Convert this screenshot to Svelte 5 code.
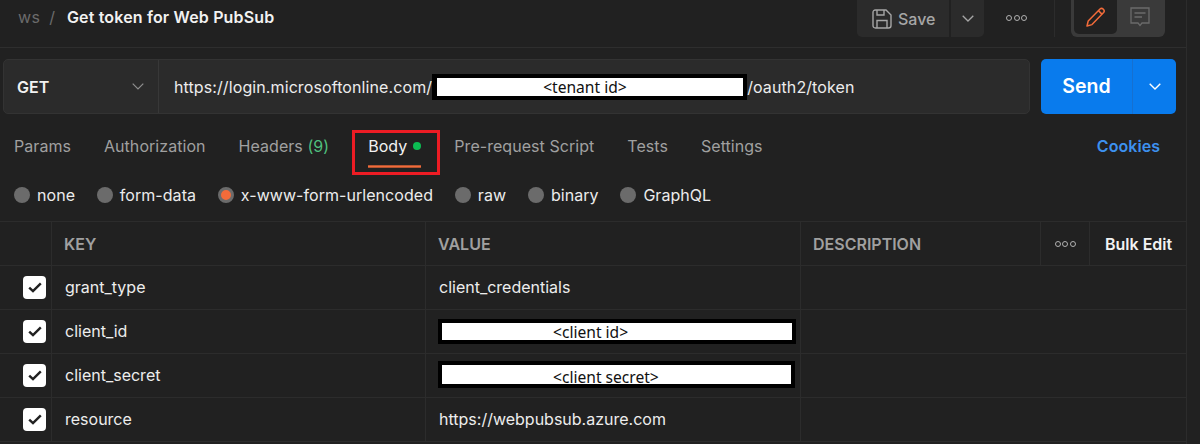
<script lang="ts">
	const tabs = [
		{ label: 'Params' },
		{ label: 'Authorization' },
		{ label: 'Headers', count: '(9)' },
		{ label: 'Body', active: true },
		{ label: 'Pre-request Script' },
		{ label: 'Tests' },
		{ label: 'Settings' }
	];
	const bodyTypes = ['none', 'form-data', 'x-www-form-urlencoded', 'raw', 'binary', 'GraphQL'];
	const rows = [
		{ key: 'grant_type', value: 'client_credentials' },
		{ key: 'client_id', mask: '<client id>' },
		{ key: 'client_secret', mask: '<client secret>' },
		{ key: 'resource', value: 'https://webpubsub.azure.com' }
	];
</script>

<div class="page">
	<!-- Title bar -->
	<header class="topbar">
		<span class="crumb">ws</span>
		<span class="slash">/</span>
		<span class="title">Get token for Web PubSub</span>
		<div class="actions">
			<div class="save">
				<svg width="20" height="20" viewBox="0 0 20 20" fill="none" stroke="#a6a6a6" stroke-width="1.4">
					<path d="M1 3.5 Q1 1 3.5 1 H14 L19 6 V16.5 Q19 19 16.5 19 H3.5 Q1 19 1 16.5 Z" />
					<path d="M5 1 V6 H12 V1" />
					<path d="M5 19 V11.5 H15 V19" />
				</svg>
				<span>Save</span>
			</div>
			<div class="save-more">
				<svg width="12" height="7" viewBox="0 0 12 7" fill="none" stroke="#a6a6a6" stroke-width="1.3"><path d="M.7.7 6 6 11.3.7" /></svg>
			</div>
			<div class="dots"><i></i><i></i><i></i></div>
			<div class="divider"></div>
			<div class="toggle">
				<div class="toggle-on">
					<svg width="20" height="20" viewBox="0 0 20 20" fill="none" stroke="#f26b3a" stroke-width="1.5" stroke-linejoin="round">
						<path d="M1 19 L2.2 14 L14 2 Q15.6 .6 17.4 2.2 Q19 4 17.6 5.6 L6 17.6 Z" />
						<path d="M12.4 3.6 L16.2 7.4" />
					</svg>
				</div>
				<div class="toggle-off">
					<svg width="20" height="20" viewBox="0 0 20 20" fill="none" stroke="#6b6b6b" stroke-width="1.3">
						<path d="M1 1 H19 V16 H12 L10 18.5 L8 16 H1 Z" />
						<path d="M4.5 6 H15.5 M4.5 10 H12" />
					</svg>
				</div>
			</div>
		</div>
	</header>

	<!-- URL row -->
	<div class="request">
		<div class="urlbox">
			<div class="method">
				<span>GET</span>
				<svg width="12" height="7" viewBox="0 0 12 7" fill="none" stroke="#8f8f8f" stroke-width="1.2"><path d="M.7.7 6 6 11.3.7" /></svg>
			</div>
			<div class="url">
				<span>https://login.microsoftonline.com/</span><span class="mask tenant">&lt;tenant id&gt;</span><span>/oauth2/token</span>
			</div>
		</div>
		<div class="send">
			<span class="send-label">Send</span>
			<span class="send-more">
				<svg width="12" height="7" viewBox="0 0 12 7" fill="none" stroke="#fff" stroke-width="1.4"><path d="M.7.7 6 6 11.3.7" /></svg>
			</span>
		</div>
	</div>

	<!-- Tabs -->
	<nav class="tabs">
		{#each tabs as tab}
			<div class="tab" class:active={tab.active}>
				{tab.label}
				{#if tab.count}<span class="count">{tab.count}</span>{/if}
				{#if tab.active}
					<span class="dot"></span>
					<span class="underline"></span>
					<span class="callout"></span>
				{/if}
			</div>
		{/each}
		<div class="cookies">Cookies</div>
	</nav>

	<!-- Body type -->
	<div class="types">
		{#each bodyTypes as type}
			<div class="type">
				<span class="radio" class:checked={type === 'x-www-form-urlencoded'}></span>
				<span>{type}</span>
			</div>
		{/each}
	</div>

	<!-- Params table -->
	<div class="table">
		<div class="cell head"></div>
		<div class="cell head label">KEY</div>
		<div class="cell head label">VALUE</div>
		<div class="cell head label">DESCRIPTION</div>
		<div class="cell head more"><div class="dots small"><i></i><i></i><i></i></div></div>
		<div class="cell head bulk">Bulk Edit</div>

		{#each rows as row}
			<div class="cell check">
				<span class="box">
					<svg width="14" height="11" viewBox="0 0 14 11" fill="none" stroke="#212121" stroke-width="2.4"><path d="M1.2 5.6 5 9.2 12.8 1.4" /></svg>
				</span>
			</div>
			<div class="cell text">{row.key}</div>
			<div class="cell text">
				{#if row.mask}
					<span class="mask wide" class:secret={row.mask.includes('secret')}>{row.mask}</span>
				{:else}
					{row.value}
				{/if}
			</div>
			<div class="cell desc"></div>
		{/each}
	</div>
</div>

<style>
	:global(body) {
		background: #212121;
	}

	.page {
		position: relative;
		width: 1187px;
		height: 444px;
		box-sizing: border-box;
		border-right: 1px solid #2c2c2c;
		overflow: hidden;
		background: #212121;
		color: #f0f0f0;
		font-family: Inter, 'Liberation Sans', sans-serif;
	}

	/* Title bar */
	.topbar {
		display: flex;
		align-items: flex-start;
		height: 48px;
		box-sizing: border-box;
		padding-left: 18px;
		border-bottom: 1px solid #2e2e2e;
	}

	.crumb {
		margin-top: 7px;
		font-size: 16px;
		line-height: 20px;
		color: #6b6b6b;
		letter-spacing: 0.3px;
	}

	.slash {
		margin: 7px 0 0 9px;
		font-size: 16px;
		line-height: 20px;
		color: #6b6b6b;
	}

	.title {
		margin: 7px 0 0 12px;
		font-size: 16px;
		line-height: 20px;
		font-weight: 600;
		letter-spacing: 0.16px;
		color: #f2f2f2;
	}

	.actions {
		display: flex;
		align-items: flex-start;
		margin-left: auto;
		margin-top: -10px;
		margin-right: 21px;
	}

	.save,
	.save-more {
		display: flex;
		align-items: center;
		height: 47px;
		box-sizing: border-box;
		padding-top: 10px;
		background: #2b2b2b;
	}

	.save {
		width: 92px;
		padding-left: 15px;
		gap: 6px;
		border-radius: 0 0 0 5px;
		font-size: 16px;
		font-weight: 500;
		color: #a6a6a6;
	}

	.save-more {
		width: 33px;
		margin-left: 2px;
		justify-content: center;
		border-radius: 0 0 5px 0;
	}

	.dots {
		display: flex;
		gap: 1.5px;
		margin: 25px 0 0 22px;
	}

	.dots i {
		display: block;
		width: 4px;
		height: 4px;
		border: 1.2px solid #b0b0b0;
		border-radius: 50%;
	}

	.divider {
		width: 1px;
		height: 47px;
		margin-left: 27px;
		background: #2c2c2c;
	}

	.toggle {
		display: flex;
		width: 94px;
		height: 47px;
		margin-left: 16px;
		box-sizing: border-box;
		padding: 0 3px 3px;
		border-radius: 0 0 6px 6px;
		background: #3a3a3a;
	}

	.toggle-on,
	.toggle-off {
		display: flex;
		align-items: center;
		justify-content: center;
		padding-top: 10px;
		height: 34px;
		width: 43px;
	}

	.toggle-on {
		background: #212121;
		border-radius: 0 0 5px 5px;
	}

	.toggle-off {
		flex: 1;
	}

	/* URL row */
	.request {
		display: flex;
		gap: 11px;
		margin: 11px 10px 0 3px;
		height: 55px;
	}

	.urlbox {
		display: flex;
		flex: 1;
		box-sizing: border-box;
		border: 1px solid #333;
		border-radius: 5px;
		background: #2b2b2b;
	}

	.method {
		display: flex;
		align-items: center;
		justify-content: space-between;
		width: 155px;
		box-sizing: border-box;
		padding: 0 14px 0 13px;
		border-right: 1px solid #383838;
		font-size: 16px;
		font-weight: 600;
		color: #f2f2f2;
	}

	.url {
		display: flex;
		align-items: center;
		padding-left: 15px;
		font-size: 16px;
		letter-spacing: 0.1px;
		color: #ededed;
	}

	.mask {
		display: inline-block;
		box-sizing: border-box;
		border: 4px solid #000;
		background: #fff;
		color: #111;
		font-family: 'Noto Sans', 'Liberation Sans', sans-serif;
		font-size: 15.6px;
		letter-spacing: 0;
		text-align: left;
	}

	.tenant {
		width: 315px;
		height: 26px;
		line-height: 19px;
		border-left-width: 5px;
		padding-left: 106px;
	}

	.send {
		display: flex;
		width: 135px;
		border-radius: 5px;
		background: #097bed;
		color: #fff;
		font-size: 19.5px;
		font-weight: 600;
		line-height: 55px;
	}

	.send-label {
		width: 91px;
		text-align: center;
		border-right: 1px solid #1670d0;
	}

	.send-more {
		display: flex;
		align-items: center;
		justify-content: center;
		flex: 1;
	}

	/* Tabs */
	.tabs {
		display: flex;
		align-items: center;
		height: 32px;
		margin-top: 16px;
		padding: 0 26px 0 14px;
		gap: 33px;
		font-size: 16px;
		letter-spacing: 0.05px;
		color: #a0a0a0;
	}

	.tab {
		position: relative;
		white-space: nowrap;
	}

	.tab.active {
		color: #f2f2f2;
		margin-left: 6px;
		padding-right: 14px;
	}

	.count {
		color: #4fbf7d;
	}

	.dot {
		position: absolute;
		right: 0;
		top: 6px;
		width: 8px;
		height: 8px;
		border-radius: 50%;
		background: #0cbb52;
	}

	.underline {
		position: absolute;
		left: 0;
		right: 0;
		bottom: -12px;
		height: 3px;
		background: #f26b3a;
		transform: scaleY(0.8);
	}

	.callout {
		position: absolute;
		left: -16px;
		top: -6px;
		width: 88px;
		height: 45px;
		box-sizing: border-box;
		border: 3px solid #ed1c24;
	}

	.cookies {
		margin-left: auto;
		color: #3d91ef;
		font-weight: 600;
	}

	/* Body type */
	.types {
		display: flex;
		align-items: center;
		gap: 21.8px;
		height: 30px;
		margin-top: 18px;
		padding-left: 14px;
		font-size: 16px;
		letter-spacing: 0.05px;
		color: #ececec;
	}

	.type {
		display: flex;
		align-items: center;
		gap: 7px;
	}

	.radio {
		width: 16px;
		height: 16px;
		box-sizing: border-box;
		border-radius: 50%;
		background: #6b6b6b;
	}

	.radio.checked {
		border: 3px solid #6b6b6b;
		background: #f26b3a;
	}

	/* Table */
	.table {
		display: grid;
		grid-template-columns: 52px 374px 375px 240px 49px 1fr;
		grid-auto-rows: 44px;
		margin-top: 11px;
		border-top: 1px solid #2c2c2c;
	}

	.cell {
		display: flex;
		align-items: center;
		box-sizing: border-box;
		border-right: 1px solid #2c2c2c;
		border-bottom: 1px solid #2c2c2c;
		padding-left: 12px;
		font-size: 16px;
		color: #ededed;
	}

	.cell.text {
		padding: 0 0 2px 13px;
	}

	.head.label {
		font-size: 16px;
		font-weight: 600;
		color: #a0a0a0;
	}

	.more {
		justify-content: center;
		padding-left: 0;
	}

	.dots.small {
		margin: 0;
	}

	.bulk {
		border-right: 0;
		padding-left: 15px;
		font-weight: 600;
		color: #f2f2f2;
	}

	.check {
		justify-content: flex-end;
		padding: 0 5px 0 0;
	}

	.box {
		display: flex;
		align-items: center;
		justify-content: center;
		width: 23px;
		height: 23px;
		border-radius: 4px;
		background: #fff;
	}

	.desc {
		grid-column: span 3;
		border-right: 0;
	}

	.wide {
		width: 358px;
		height: 25px;
		line-height: 19px;
		padding-left: 111px;
		margin: 2px 0 0 -1px;
	}

	.wide.secret {
		width: 357px;
		height: 27px;
		line-height: 25px;
		margin-top: 0;
	}
</style>
